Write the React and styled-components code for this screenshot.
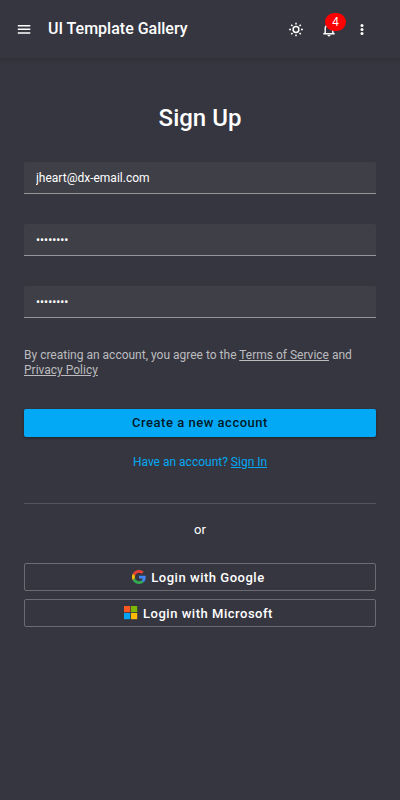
import React from "react";
import styled, { createGlobalStyle } from "styled-components";

const GlobalStyle = createGlobalStyle`
  * { box-sizing: border-box; }
  body {
    margin: 0;
    background: #363640;
    color: #fff;
    font-family: Roboto, "Liberation Sans", sans-serif;
    font-size: 12px;
  }
`;

const Page = styled.div`
  min-height: 800px;
  background: #363640;
`;

const Header = styled.header`
  display: flex;
  align-items: center;
  height: 58px;
  padding: 0 24px 0 10px;
  box-shadow: 0 2px 4px rgba(0, 0, 0, 0.12);
`;

const IconButton = styled.button`
  position: relative;
  display: flex;
  align-items: center;
  justify-content: center;
  width: 28px;
  height: 28px;
  margin: 0;
  padding: 0;
  border: 0;
  background: none;
  color: #fff;
`;

const Title = styled.div`
  flex: 1;
  margin-left: 10px;
  font-size: 16px;
  font-weight: 500;
  line-height: 20px;
  padding-bottom: 1px;
`;

const Actions = styled.div`
  display: flex;
  gap: 5px;
`;

const Badge = styled.span`
  position: absolute;
  left: 10px;
  top: -2px;
  width: 21px;
  height: 18px;
  border-radius: 9px;
  background: #f00;
  font-size: 12px;
  line-height: 18px;
  text-align: center;
`;

const Form = styled.form`
  display: flex;
  flex-direction: column;
  padding: 44px 24px 0;
`;

const Heading = styled.h1`
  margin: 0 0 28px;
  font-size: 24px;
  font-weight: 500;
  line-height: 32px;
  text-align: center;
`;

const Input = styled.input`
  height: 32px;
  margin: 0 0 30px;
  padding: 0 12px;
  border: 0;
  border-bottom: 1px solid #94949a;
  border-radius: 2px 2px 0 0;
  outline: none;
  background: #3f3f48;
  color: #fff;
  font: 12px Roboto, "Liberation Sans", sans-serif;
`;

const Policy = styled.p`
  margin: 0 0 31px;
  color: #bcbcbf;
  line-height: 15px;
`;

const Link = styled.a`
  color: inherit;
  text-decoration: underline;
`;

const Button = styled.button`
  display: flex;
  align-items: center;
  justify-content: center;
  gap: 5px;
  height: 28px;
  margin: 0 0 8px;
  padding: ${(p) => (p.$filled ? "0" : "0 3px 0 0")};
  border: ${(p) => (p.$filled ? "0" : "1px solid #6b6b73")};
  border-radius: 2px;
  background: ${(p) => (p.$filled ? "#03a9f4" : "transparent")};
  box-shadow: ${(p) => (p.$filled ? "0 1px 3px rgba(0, 0, 0, 0.4)" : "none")};
  color: ${(p) => (p.$filled ? "rgba(0, 0, 0, 0.87)" : "#fff")};
  font: 500 13px/16px Roboto, "Liberation Sans", sans-serif;
  letter-spacing: 0.04em;
`;

const ProviderLabel = styled.span`
  padding-top: 2px;
`;

const SignIn = styled.div`
  margin-top: 9px;
  color: #03a9f4;
  line-height: 16px;
  text-align: center;
`;

const Divider = styled.hr`
  width: 100%;
  height: 1px;
  margin: 33px 0 18px;
  border: 0;
  background: #54545c;
`;

const Or = styled.div`
  margin-bottom: 25px;
  font-size: 13px;
  line-height: 16px;
  text-align: center;
`;

const MenuIcon = () => (
  <svg width="18" height="18" viewBox="0 0 18 18" fill="currentColor">
    <path d="M2.800 5h12.500v1.500H2.800zM2.800 8.600h12.500v1.500H2.800zM2.800 12.200h12.500v1.500H2.800z" />
  </svg>
);

const SunIcon = () => (
  <svg width="18" height="18" viewBox="0 0 18 18" fill="none" stroke="currentColor" strokeWidth="1.5">
    <circle cx="9" cy="9.5" r="2.9" />
    <path d="M9 2.700v1.900M9 14.400v1.900M2.100 9.500H4M14 9.500h1.900M4.200 4.700l1.300 1.300M12.500 13l1.300 1.300M4.200 14.300L5.500 13M12.500 6l1.300-1.300" />
  </svg>
);

const BellIcon = () => (
  <svg width="18" height="18" viewBox="0 0 18 18" fill="currentColor">
    <path d="M9 16.500c.9 0 1.500-.6 1.500-1.400H7.500c0 .8.6 1.400 1.500 1.400zM13.500 12.500V8.600c0-2.200-1.300-3.900-3.400-4.400V3.700a1.100 1.100 0 0 0-2.200 0v.5C5.800 4.700 4.500 6.400 4.500 8.600v3.900l-1.200.8v1.300h11.400v-1.300zM12.100 13.100H5.900V8.600c0-1.800 1.200-3.200 3.100-3.200s3.100 1.400 3.100 3.200z" />
  </svg>
);

const MoreIcon = () => (
  <svg width="18" height="18" viewBox="0 0 18 18" fill="currentColor">
    <circle cx="9" cy="5.500" r="1.500" />
    <circle cx="9" cy="9.500" r="1.500" />
    <circle cx="9" cy="13.500" r="1.500" />
  </svg>
);

const GoogleIcon = () => (
  <svg width="14" height="14" viewBox="0 0 48 48">
    <path fill="#EA4335" d="M24 9.500c3.540 0 6.710 1.220 9.210 3.600l6.850-6.850C35.900 2.380 30.470 0 24 0 14.620 0 6.510 5.380 2.560 13.220l7.980 6.190C12.430 13.720 17.740 9.500 24 9.500z" />
    <path fill="#4285F4" d="M46.980 24.550c0-1.570-.150-3.090-.380-4.550H24v9.020h12.940c-.580 2.960-2.260 5.480-4.780 7.180l7.730 6c4.510-4.180 7.090-10.360 7.090-17.650z" />
    <path fill="#FBBC05" d="M10.530 28.590c-.480-1.450-.760-2.990-.760-4.590s.270-3.140.760-4.590l-7.980-6.190C.920 16.460 0 20.120 0 24s.920 7.540 2.560 10.780z" />
    <path fill="#34A853" d="M24 48c6.480 0 11.930-2.130 15.890-5.810l-7.730-6c-2.150 1.450-4.920 2.300-8.160 2.300-6.260 0-11.570-4.220-13.470-9.910l-7.980 6.190C6.510 42.620 14.620 48 24 48z" />
  </svg>
);

const MicrosoftIcon = () => (
  <svg width="14" height="14" viewBox="0 0 14 14">
    <path fill="#ff5722" d="M0 0h6.200v6.200H0z" />
    <path fill="#7cb900" d="M7 0h6.200v6.200H7z" />
    <path fill="#03a4f4" d="M0 7h6.200v6.200H0z" />
    <path fill="#ffb900" d="M7 7h6.200v6.200H7z" />
  </svg>
);

export default function App() {
  return (
    <Page>
      <GlobalStyle />
      <Header>
        <IconButton aria-label="Menu"><MenuIcon /></IconButton>
        <Title>UI Template Gallery</Title>
        <Actions>
          <IconButton aria-label="Theme"><SunIcon /></IconButton>
          <IconButton aria-label="Notifications">
            <BellIcon />
            <Badge>4</Badge>
          </IconButton>
          <IconButton aria-label="More"><MoreIcon /></IconButton>
        </Actions>
      </Header>
      <Form>
        <Heading>Sign Up</Heading>
        <Input type="text" defaultValue="jheart@dx-email.com" />
        <Input type="password" defaultValue="password" />
        <Input type="password" defaultValue="password" />
        <Policy>
          By creating an account, you agree to the <Link>Terms of Service</Link> and <Link>Privacy Policy</Link>
        </Policy>
        <Button type="button" $filled>Create a new account</Button>
        <SignIn>Have an account? <Link>Sign In</Link></SignIn>
        <Divider />
        <Or>or</Or>
        <Button type="button"><GoogleIcon /><ProviderLabel>Login with Google</ProviderLabel></Button>
        <Button type="button"><MicrosoftIcon /><ProviderLabel>Login with Microsoft</ProviderLabel></Button>
      </Form>
    </Page>
  );
}
